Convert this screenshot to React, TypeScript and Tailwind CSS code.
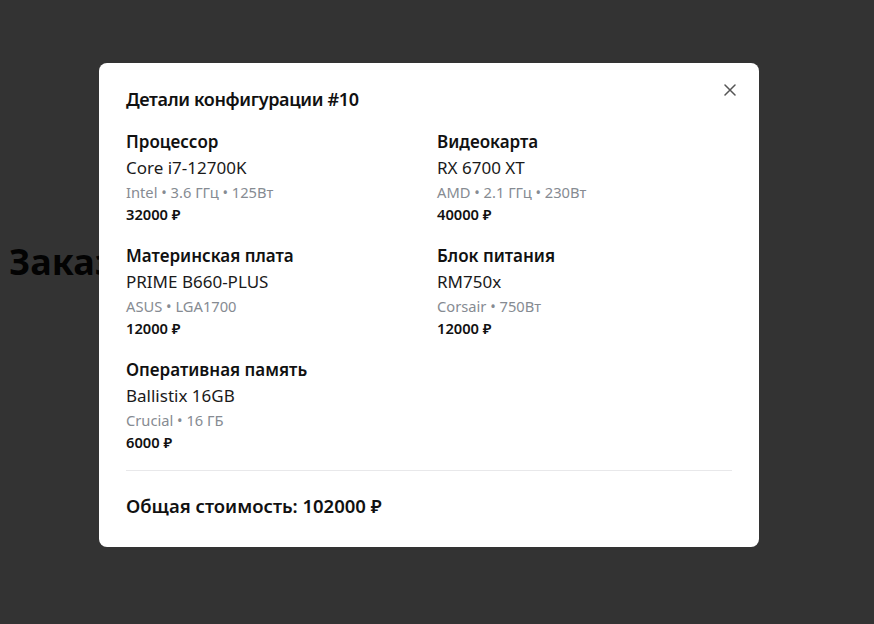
import React from "react";

type Part = {
  label: string;
  name: string;
  specs: string;
  price: number;
};

const parts: Part[] = [
  { label: "Процессор", name: "Core i7-12700K", specs: "Intel • 3.6 ГГц • 125Вт", price: 32000 },
  { label: "Видеокарта", name: "RX 6700 XT", specs: "AMD • 2.1 ГГц • 230Вт", price: 40000 },
  { label: "Материнская плата", name: "PRIME B660-PLUS", specs: "ASUS • LGA1700", price: 12000 },
  { label: "Блок питания", name: "RM750x", specs: "Corsair • 750Вт", price: 12000 },
  { label: "Оперативная память", name: "Ballistix 16GB", specs: "Crucial • 16 ГБ", price: 6000 },
];

const PartCard: React.FC<{ part: Part }> = ({ part }) => (
  <div className="flex flex-col">
    <p className="text-[17px] leading-6 font-semibold text-[#111]">{part.label}</p>
    <p className="mt-0.5 text-[17px] leading-6 text-[#1a1a1a]">{part.name}</p>
    <p className="mt-0.5 text-[14.7px] leading-5 text-[#868b92]">{part.specs}</p>
    <p className="mt-0.5 text-[14.7px] leading-5 font-semibold text-[#111]">{part.price} ₽</p>
  </div>
);

export default function App() {
  const total = parts.reduce((sum, p) => sum + p.price, 0);

  return (
    <div
      className="relative h-[624px] w-full overflow-hidden bg-white"
      style={{ fontFamily: '"Segoe UI", "Noto Sans", sans-serif' }}
    >
      <div className="pl-[9px] pt-[242px]">
        <div className="w-[90px] overflow-hidden whitespace-nowrap">
          <h1 className="text-4xl font-bold text-[#111]">Заказы</h1>
        </div>
      </div>

      {/* modal */}
      <div className="absolute inset-0 flex items-start justify-center bg-black/80 pt-[63px] pr-[16px]">
        <div className="relative w-[660px] rounded-lg bg-white px-[27px] pt-[22px] pb-[27px]">
          <button className="absolute right-[17px] top-[15px] flex h-6 w-6 items-center justify-center text-[#555]">
            <svg width="12" height="12" viewBox="0 0 12 12" fill="none" stroke="currentColor" strokeWidth="1.5" strokeLinecap="round">
              <path d="M1 1l10 10M11 1L1 11" />
            </svg>
          </button>

          <h2 className="text-[18px] leading-7 font-semibold tracking-[-0.35px] text-[#111]">
            Детали конфигурации #10
          </h2>

          <div className="mt-[17px] grid grid-cols-2 gap-x-4 gap-y-5">
            {parts.map((p) => (
              <PartCard key={p.label} part={p} />
            ))}
          </div>

          <div className="mt-[18px] border-t border-[#e8e8ea] pt-[21px]">
            <p className="text-[18.5px] leading-7 font-semibold text-[#111]">Общая стоимость: {total} ₽</p>
          </div>
        </div>
      </div>
    </div>
  );
}
